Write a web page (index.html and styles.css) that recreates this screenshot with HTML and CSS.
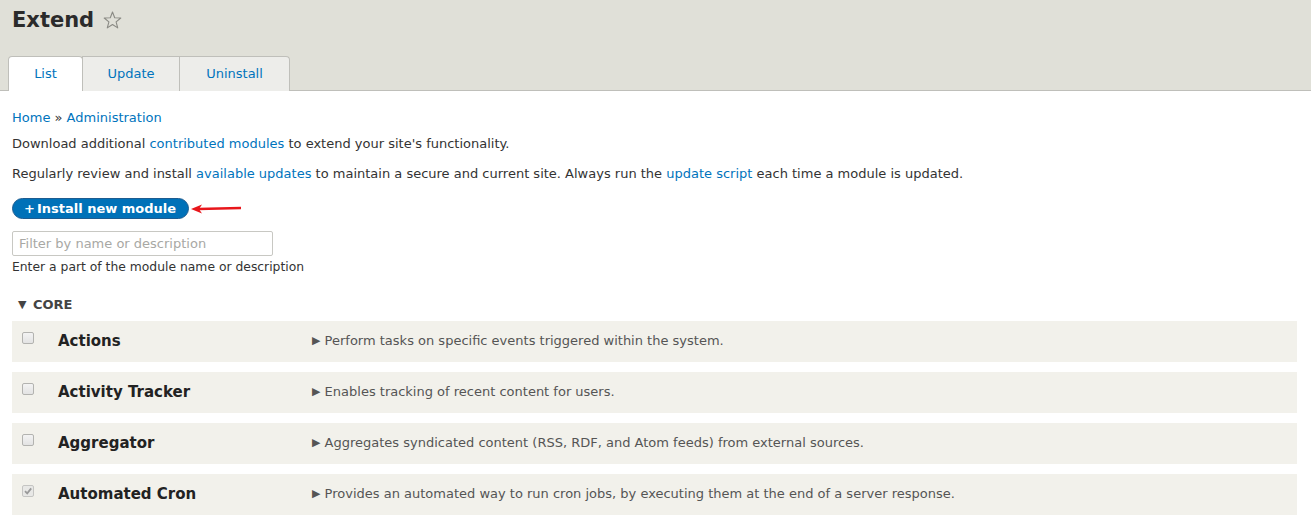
FILE: index.html
```html
<!DOCTYPE html>
<html>
<head>
<meta charset="utf-8">
<link rel="stylesheet" href="styles.css">
</head>
<body>
<header class="page-header">
  <div class="title-wrap">
    <h1 class="page-title">Extend <svg class="star" width="19" height="18" viewBox="0 0 19 18"><polygon points="9.5,1 11.7,6.7 17.8,7 13.1,10.9 14.7,16.9 9.5,13.5 4.3,16.9 5.9,10.9 1.2,7 7.3,6.7" fill="none" stroke="#8a8a84" stroke-width="1.1" stroke-linejoin="round"/></svg></h1>
  </div>
  <nav class="tabs">
    <a class="tab active">List</a>
    <a class="tab">Update</a>
    <a class="tab">Uninstall</a>
  </nav>
</header>
<main class="content">
  <div class="breadcrumb"><a>Home</a> » <a>Administration</a></div>
  <p class="help">Download additional <a>contributed modules</a> to extend your site's functionality.</p>
  <p class="help">Regularly review and install <a>available updates</a> to maintain a secure and current site. Always run the <a>update script</a> each time a module is updated.</p>
  <div class="action-row">
    <a class="button-action">+<span>Install new module</span></a>
    <svg class="arrow" width="54" height="12" viewBox="0 0 54 12"><line x1="8" y1="6" x2="51" y2="5" stroke="#e8161b" stroke-width="2.4"/><polygon points="1,6 12,1.5 9,6 12,10.5" fill="#e8161b"/></svg>
  </div>
  <div class="filter">
    <input class="filter-input" type="text" placeholder="Filter by name or description">
    <div class="filter-desc">Enter a part of the module name or description</div>
  </div>
  <div class="package">
    <div class="package-title"><span class="tri">▼</span> CORE</div>
    <div class="rows">
      <div class="row"><span class="cb"></span><span class="name">Actions</span><span class="desc"><span class="rtri">▶</span> Perform tasks on specific events triggered within the system.</span></div>
      <div class="row"><span class="cb"></span><span class="name">Activity Tracker</span><span class="desc"><span class="rtri">▶</span> Enables tracking of recent content for users.</span></div>
      <div class="row"><span class="cb"></span><span class="name">Aggregator</span><span class="desc"><span class="rtri">▶</span> Aggregates syndicated content (RSS, RDF, and Atom feeds) from external sources.</span></div>
      <div class="row"><span class="cb checked"><svg width="10" height="10" viewBox="0 0 10 10"><path d="M2 5.2 L4.2 7.4 L8.2 2.4" fill="none" stroke="#9a9a9a" stroke-width="1.8"/></svg></span><span class="name">Automated Cron</span><span class="desc"><span class="rtri">▶</span> Provides an automated way to run cron jobs, by executing them at the end of a server response.</span></div>
    </div>
  </div>
</main>
</body>
</html>
```

FILE: styles.css
```css
html, body {
  margin: 0;
  padding: 0;
  background: #fff;
  font-family: "DejaVu Sans", sans-serif;
  font-size: 13px;
  color: #333;
  overflow: hidden;
}
a { color: #0074bd; text-decoration: none; }

.page-header {
  background: #e0e0d8;
  border-bottom: 1px solid #bfbfba;
  padding: 0 0 0 8px;
  height: 91px;
  box-sizing: border-box;
}
.title-wrap {
  height: 56px;
  box-sizing: border-box;
  padding: 5px 0 0 4px;
}
.page-title {
  margin: 0;
  font-size: 21px;
  font-weight: bold;
  color: #2b2b2b;
  height: 30px;
  display: flex;
  align-items: center;
}
.star { margin-left: 9px; margin-top: 0; }

.tabs {
  display: flex;
  height: 34px;
}
.tab {
  box-sizing: border-box;
  height: 35px;
  border: 1px solid #bfbfba;
  border-bottom: none;
  border-radius: 4px 4px 0 0;
  background: #ededea;
  color: #0074bd;
  display: flex;
  align-items: center;
  justify-content: center;
  padding-bottom: 1px;
}
.tab + .tab { margin-left: -1px; border-radius: 0 4px 0 0; }
.tab:nth-child(2) { border-radius: 0; }
.tab:nth-child(1) { width: 75px; }
.tab:nth-child(2) { width: 98px; }
.tab:nth-child(3) { width: 111px; }
.tab.active { background: #fff; position: relative; z-index: 1; }

.content { padding: 10px 14px 0 12px; }
.breadcrumb { line-height: 16px; margin-top: 9px; }
.help { margin: 10px 0 0; line-height: 16px; }
.help + .help { margin-top: 14px; }

.action-row {
  display: flex;
  align-items: center;
  margin-top: 16px;
}
.button-action {
  display: inline-flex;
  align-items: center;
  height: 21px;
  box-sizing: border-box;
  padding: 0 12px 1px 11px;
  background: #0071b8;
  border: 1px solid #1e5c90;
  border-radius: 11px;
  color: #fff;
  font-weight: bold;
  font-size: 13px;
}
.button-action span { margin-left: 2px; }
.arrow { margin-left: 1px; margin-top: 0; }

.filter { margin-top: 12px; }
.filter-input {
  display: block;
  box-sizing: border-box;
  width: 261px;
  height: 25px;
  border: 1px solid #c8c8c3;
  border-radius: 2px;
  padding: 0 6px;
  font-family: "DejaVu Sans", sans-serif;
  font-size: 13px;
  color: #333;
  margin: 0;
}
.filter-input::placeholder { color: #a8a8a4; }
.filter-desc { font-size: 12.35px; color: #333; line-height: 16px; margin-top: 3px; }

.package { margin-top: 22px; }
.package-title {
  font-size: 13px;
  font-weight: bold;
  color: #444;
  text-transform: uppercase;
  line-height: 16px;
  padding-left: 6px;
}
.tri { font-size: 11px; position: relative; top: -1px; margin-right: 2px; }
.rows {
  margin-top: 7px;
  display: flex;
  flex-direction: column;
  gap: 10px;
}
.row {
  height: 41px;
  background: #f2f1eb;
  display: flex;
  align-items: center;
}
.cb {
  box-sizing: border-box;
  width: 12px;
  height: 12px;
  border: 1px solid #b3b3b0;
  border-radius: 2px;
  background: linear-gradient(#f3f3f3, #e3e3e3);
  margin: 0 0 0 10px;
  align-self: flex-start;
  margin-top: 11px;
  display: flex;
  align-items: center;
  justify-content: center;
}
.cb.checked { background: #e8e8e6; border-color: #c5c5c3; }
.name {
  font-size: 15px;
  font-weight: bold;
  color: #222;
  margin-left: 24px;
  width: 254px;
  position: relative;
  top: -1px;
}
.desc { color: #555; font-size: 13px; position: relative; top: -1px; }
.rtri { font-size: 11px; margin-right: 0; position: relative; top: -1px; }
```
